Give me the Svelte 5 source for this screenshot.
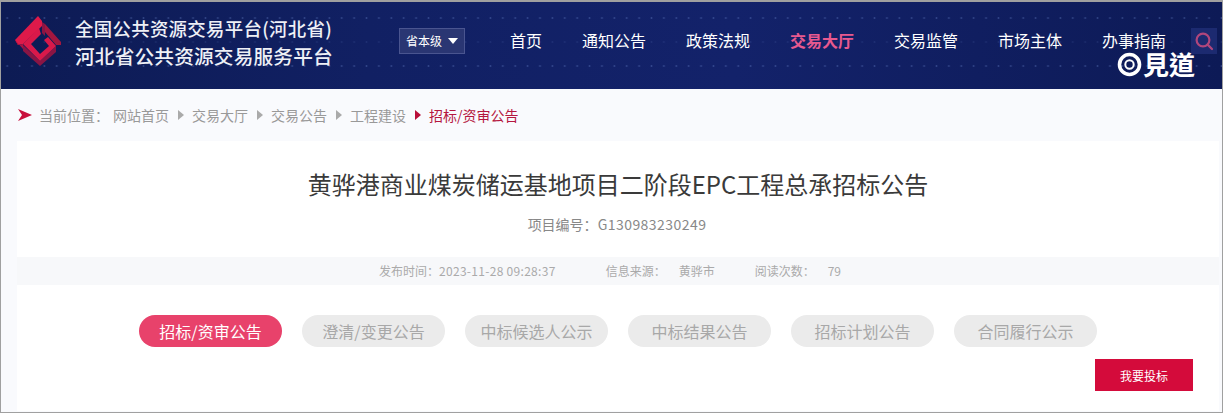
<script>
    const navItems = ["首页", "通知公告", "政策法规", "交易大厅", "交易监管", "市场主体", "办事指南"];
    const crumbs = ["网站首页", "交易大厅", "交易公告", "工程建设"];
    const tabs = ["招标/资审公告", "澄清/变更公告", "中标候选人公示", "中标结果公告", "招标计划公告", "合同履行公示"];
</script>

<div class="page">
    <header class="top">
        <div class="brand">
            <svg class="logo" width="48" height="50" viewBox="0 0 48 50">
                <polygon points="8,29 25,45 41,30 41,36 25,50 8,35" fill="#8a1544" />
                <polygon points="27,6 30,8 30,20 27,17" fill="#8a1544" />
                <polygon points="30,8 46,26 46,29 41,29 30,16" fill="#a3173f" />
                <polygon points="8,28 25,45 41,30 33,21 29,24 34,30 25,38 16,28 26,18 24,12" fill="#d9194a" />
                <polygon points="23,0 27,5 27,10 8,28 3,29 0,24" fill="#de1a4a" />
                <polygon points="0,24 3,29 8,28 8,33" fill="#a81342" />
            </svg>
            <div class="brand-text">
                <div class="line-one">全国公共资源交易平台(河北省)</div>
                <div class="line-two">河北省公共资源交易服务平台</div>
            </div>
        </div>
        <div class="level">省本级<span class="caret"></span></div>
        <nav class="nav">
            {#each navItems as item}
                <span class:active={item === "交易大厅"}>{item}</span>
            {/each}
        </nav>
        <div class="search">
            <svg width="20" height="20" viewBox="0 0 20 20" fill="none" stroke="#b0467c" stroke-width="2.2">
                <circle cx="9" cy="9" r="6.4" />
                <path d="M13.6 13.6 L18 18" stroke-linecap="round" />
            </svg>
        </div>
    </header>

    <div class="mark">
        <svg width="25" height="25" viewBox="0 0 25 25" fill="none" stroke="#fff">
            <circle cx="12.5" cy="12.5" r="10" stroke-width="3.6" />
            <circle cx="12.5" cy="12.5" r="4.2" stroke-width="2" />
        </svg>
        <span>見道</span>
    </div>

    <div class="crumbs">
        <svg width="14" height="12" viewBox="0 0 14 12"><polygon points="0,0 14,6 0,12 4,6" fill="#c8103c" /></svg>
        <span class="here">当前位置：</span>
        {#each crumbs as c}
            <span>{c}</span>
            <span class="tri"></span>
        {/each}
        <span class="current">招标/资审公告</span>
    </div>

    <main class="card">
        <h1>黄骅港商业煤炭储运基地项目二阶段EPC工程总承招标公告</h1>
        <div class="code">项目编号：<span class="num">G130983230249</span></div>
        <div class="meta">
            <span>发布时间：<span class="stamp">2023-11-28 09:28:37</span></span>
            <span class="next">信息来源：</span>
            <span>黄骅市</span>
            <span class="next last">阅读次数：</span>
            <span>79</span>
        </div>
        <div class="tabs">
            {#each tabs as t, i}
                <div class="tab" class:on={i === 0}>{t}</div>
            {/each}
        </div>
        <div class="actions">
            <button>我要投标</button>
        </div>
    </main>
</div>

<style>
    :global(body) {
        margin: 0;
    }

    .page {
        position: relative;
        box-sizing: border-box;
        width: 1223px;
        height: 413px;
        overflow: hidden;
        border: 1px solid #a0a0a0;
        border-top-width: 2px;
        background: #f9fafd;
        font-family: "Noto Sans CJK SC", "Noto Sans", sans-serif;
    }

    .top {
        display: flex;
        align-items: center;
        box-sizing: border-box;
        height: 87px;
        padding-bottom: 8px;
        background:
            radial-gradient(circle, rgba(120, 150, 220, 0.3) 0.8px, transparent 1.2px) 0 -8px / 12.4px 48px repeat,
            radial-gradient(circle, rgba(120, 150, 220, 0.12) 0.8px, transparent 1.2px) 0 16px / 12.4px 48px repeat,
            linear-gradient(90deg, #0d1b54 0%, #112063 30%, #13226a 60%, #0d1a56 100%);
    }

    .brand {
        display: flex;
        align-items: center;
        margin-left: 14px;
        width: 384px;
    }

    .logo {
        flex: none;
        margin-top: -1px;
    }

    .brand-text {
        margin-left: 12px;
        margin-top: 1px;
        color: #eef0f6;
        font-weight: 500;
        line-height: 28px;
        white-space: nowrap;
    }

    .line-one {
        font-size: 18.4px;
        letter-spacing: 0.33px;
    }

    .line-two {
        font-size: 19.7px;
        letter-spacing: 0.15px;
    }

    .level {
        display: flex;
        align-items: center;
        justify-content: center;
        box-sizing: border-box;
        width: 66px;
        height: 26px;
        margin-top: -2px;
        border: 1px solid #4a5590;
        background: #2a3673;
        color: #fff;
        font-size: 12px;
    }

    .caret {
        width: 0;
        height: 0;
        margin-left: 6px;
        border: 5px solid transparent;
        border-top: 6px solid #fff;
        border-bottom: 0;
    }

    .nav {
        display: flex;
        gap: 40px;
        margin-left: 45px;
        margin-top: -4px;
        color: #fff;
        font-size: 16px;
        white-space: nowrap;
    }

    .nav span {
        line-height: 24px;
    }

    .nav .active {
        color: #e8598f;
        font-weight: 700;
    }

    .search {
        display: flex;
        align-items: center;
        justify-content: center;
        width: 26px;
        height: 26px;
        margin-left: 25px;
        margin-top: -2px;
        background: #1c2a70;
    }

    .mark {
        position: absolute;
        left: 1116px;
        top: 48px;
        display: flex;
        align-items: center;
        color: #fff;
        font-family: "Noto Sans CJK TC", serif;
        font-size: 26px;
        font-weight: 700;
        line-height: 28px;
    }

    .mark span {
        margin-left: 1px;
    }

    .crumbs {
        display: flex;
        align-items: center;
        height: 52px;
        padding-left: 17px;
        color: #999;
        font-size: 14px;
        line-height: 50px;
    }

    .here {
        margin-left: 7px;
        margin-right: 4px;
    }

    .tri {
        width: 0;
        height: 0;
        margin: 0 8px 0 9px;
        border: 5px solid transparent;
        border-left: 6px solid #aaa;
        border-right: 0;
    }

    .crumbs .tri:nth-last-of-type(2) {
        border-left-color: #b90f3a;
    }

    .current {
        color: #b5173f;
    }

    .card {
        box-sizing: border-box;
        width: 1202px;
        height: 270px;
        margin-left: 16px;
        background: #fff;
    }

    h1 {
        margin: 0;
        padding-top: 25px;
        color: #3a3a3a;
        font-size: 24px;
        font-weight: 400;
        line-height: 36px;
        text-align: center;
    }

    .code {
        margin-top: 8px;
        padding-right: 2px;
        color: #888;
        font-size: 14px;
        line-height: 28px;
        text-align: center;
    }

    .num {
        letter-spacing: 0.45px;
    }

    .meta {
        display: flex;
        justify-content: center;
        gap: 13px;
        box-sizing: border-box;
        height: 28px;
        margin-top: 19px;
        padding-right: 16px;
        background: #f7f8fa;
        color: #aaa;
        font-size: 12px;
        line-height: 28px;
    }

    .stamp {
        letter-spacing: 0.3px;
    }

    .next {
        margin-left: 37px;
    }

    .next.last {
        margin-left: 27px;
    }

    .tabs {
        display: flex;
        justify-content: center;
        gap: 20px;
        margin-top: 30px;
    }

    .tab {
        width: 143px;
        height: 32px;
        border-radius: 16px;
        background: #ebebeb;
        color: #a8a8a8;
        font-size: 16px;
        line-height: 32px;
        text-align: center;
    }

    .tab.on {
        background: #e8426b;
        color: #fff;
    }

    .actions {
        display: flex;
        justify-content: flex-end;
        margin-top: 12px;
        padding-right: 26px;
    }

    button {
        width: 98px;
        height: 32px;
        padding: 0;
        border: 0;
        background: #d40b3b;
        color: #fff;
        font-family: inherit;
        font-size: 12px;
    }
</style>
